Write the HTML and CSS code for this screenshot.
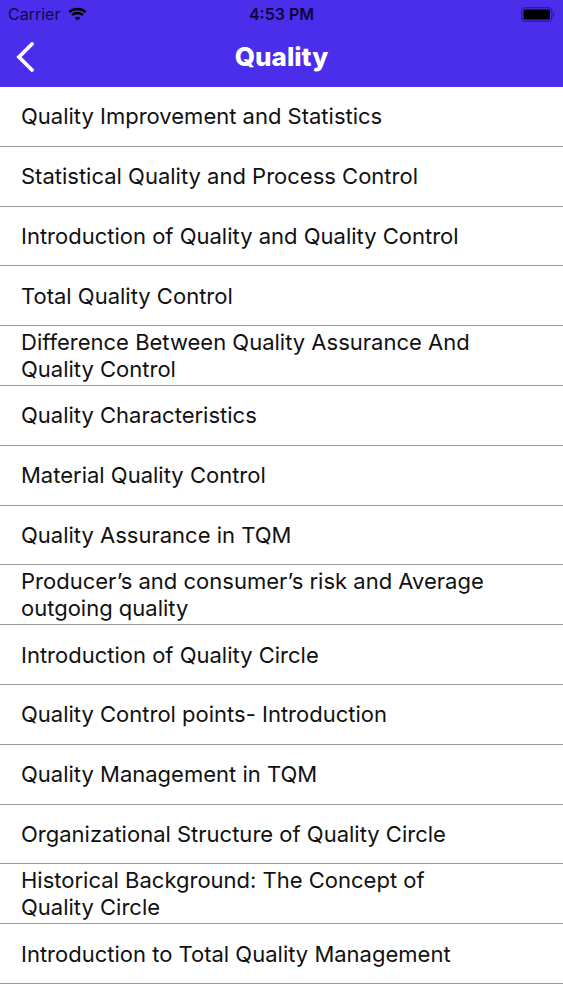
FILE: index.html
```
<!DOCTYPE html>
<html lang="en">
<head>
    <meta charset="UTF-8">
    <meta name="viewport" content="width=device-width, initial-scale=1.0">
    <title>Quality</title>
    <link rel="stylesheet" href="styles.css">
</head>
<body>
    <header class="header">
        <div class="status-bar">
            <div class="carrier">
                <span>Carrier</span>
                <svg class="wifi" viewBox="0 0 20 14" aria-hidden="true">
                    <path d="M1.300 4.900C6.300.6 13.700.6 18.700 4.900" />
                    <path d="M4.300 8.200c3.300-2.900 8.100-2.900 11.400 0" />
                    <path class="wifi-dot" d="M7 10.900c1.800-1.500 4.200-1.500 6 0L10 13.800z" />
                </svg>
            </div>
            <span class="time">4:53 PM</span>
            <svg class="battery" viewBox="0 0 34 15" aria-hidden="true">
                <rect class="battery-case" x=".7" y=".7" width="30" height="13.600" rx="3.500" />
                <rect x="2.500" y="2.500" width="26.500" height="10" rx="1.500" />
                <path class="battery-tip" d="M32 5c2 .8 2 4.200 0 5z" />
            </svg>
        </div>
        <nav class="nav-bar">
            <button class="back" type="button" aria-label="Back">
                <svg viewBox="0 0 18 30" aria-hidden="true">
                    <path d="M16 2 3 15l13 13" />
                </svg>
            </button>
            <h1 class="title">Quality</h1>
        </nav>
    </header>

    <ul class="topics">
        <li><a href="#">Quality Improvement and Statistics</a></li>
        <li><a href="#">Statistical Quality and Process Control</a></li>
        <li><a href="#">Introduction of Quality and Quality Control</a></li>
        <li><a href="#">Total Quality Control</a></li>
        <li><a href="#">Difference Between Quality Assurance And Quality Control</a></li>
        <li><a href="#">Quality Characteristics</a></li>
        <li><a href="#">Material Quality Control</a></li>
        <li><a href="#">Quality Assurance in TQM</a></li>
        <li><a href="#">Producer’s and consumer’s risk and Average outgoing quality</a></li>
        <li><a href="#">Introduction of Quality Circle</a></li>
        <li><a href="#">Quality Control points- Introduction</a></li>
        <li><a href="#">Quality Management in TQM</a></li>
        <li><a href="#">Organizational Structure of Quality Circle</a></li>
        <li><a href="#">Historical Background: The Concept of Quality Circle</a></li>
        <li><a href="#">Introduction to Total Quality Management</a></li>
    </ul>
</body>
</html>
```
FILE: styles.css
```
* {
    box-sizing: border-box;
}

body {
    display: flex;
    flex-direction: column;
    min-height: 100vh;
    margin: 0;
    padding-bottom: 16px;
    background-color: #fff;
    color: #000;
    font-family: Inter, Roboto, sans-serif;
}

.header {
    background-color: #4b2eeb;
}

.status-bar {
    display: grid;
    grid-template-columns: 1fr auto 1fr;
    align-items: center;
    height: 28px;
    padding: 0 8px;
    font-size: 16px;
}

.carrier {
    display: flex;
    align-items: center;
    gap: 8px;
    color: #120a4a;
}

.wifi {
    width: 19px;
    height: 14px;
    fill: none;
    stroke: #000;
    stroke-width: 2.6;
}

.wifi .wifi-dot {
    fill: #000;
    stroke: none;
}

.time {
    color: #0c0638;
    font-weight: 600;
}

.battery {
    justify-self: end;
    width: 34px;
    height: 15px;
}

.battery-case {
    fill: none;
    stroke: #2f1e90;
    stroke-width: 1.4;
}

.battery-tip {
    fill: #2f1e90;
}

.nav-bar {
    display: grid;
    grid-template-columns: 1fr auto 1fr;
    align-items: center;
    height: 59px;
    padding: 0 16px 2px;
}

.back {
    justify-self: start;
    display: flex;
    padding: 0;
    border: none;
    background: none;
}

.back svg {
    width: 18px;
    height: 30px;
    fill: none;
    stroke: #fff;
    stroke-width: 3.8;
    stroke-linecap: round;
}

.title {
    margin: 0;
    color: #fff;
    font-size: 26px;
    font-weight: 800;
}

.topics {
    display: grid;
    flex: 1;
    grid-auto-rows: 1fr;
    margin: 0;
    padding: 0;
    list-style: none;
}

.topics li {
    display: flex;
    border-bottom: 1px solid #999;
}

.topics a {
    display: flex;
    flex: 1;
    align-items: center;
    padding: 1px 72px 0 21px;
    color: #111;
    font-size: 22px;
    line-height: 27px;
    text-decoration: none;
}
```
